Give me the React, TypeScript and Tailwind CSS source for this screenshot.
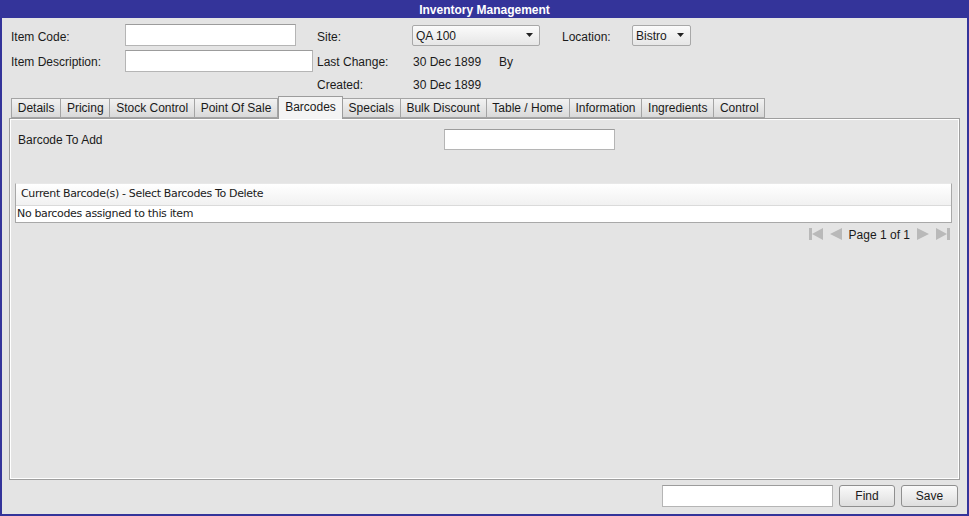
import { useState } from "react";

const tabs = [
  "Details",
  "Pricing",
  "Stock Control",
  "Point Of Sale",
  "Barcodes",
  "Specials",
  "Bulk Discount",
  "Table / Home",
  "Information",
  "Ingredients",
  "Control",
];

function TextBox({ className = "" }: { className?: string }) {
  return (
    <input
      className={`bg-white border border-[#b5b5b5] border-t-[#9c9c9c] outline-none px-1 text-[12px] ${className}`}
    />
  );
}

function Combo({ value, className = "" }: { value: string; className?: string }) {
  return (
    <div
      className={`flex items-center justify-between rounded-[2px] border border-[#a8a8a8] bg-gradient-to-b from-[#fbfbfb] to-[#e6e6e6] pl-[3px] pr-[6px] ${className}`}
    >
      <span className="pt-[1px]">{value}</span>
      <svg width="7" height="4" viewBox="0 0 7 4">
        <path d="M0 0h7L3.5 4z" fill="#222" />
      </svg>
    </div>
  );
}

function PagerIcon({ dir, end }: { dir: "l" | "r"; end?: boolean }) {
  return (
    <svg width="14" height="14" viewBox="0 0 14 14" className="shrink-0">
      {dir === "l" ? (
        <>
          {end && <rect x="0" y="1" width="3" height="12" fill="#b9b9b9" />}
          <path d={end ? "M14 1V13L3 7z" : "M13 1V13L1 7z"} fill="#b9b9b9" />
        </>
      ) : (
        <>
          <path d={end ? "M0 1V13L11 7z" : "M1 1V13L13 7z"} fill="#b9b9b9" />
          {end && <rect x="11" y="1" width="3" height="12" fill="#b9b9b9" />}
        </>
      )}
    </svg>
  );
}

export default function App() {
  const [active, setActive] = useState("Barcodes");

  return (
    <div
      className="w-[969px] h-[516px] bg-[#34349a] px-[2px] pb-[2px] flex flex-col text-[12px] text-[#1a1a1a]"
      style={{ fontFamily: '"Liberation Sans", Arial, sans-serif' }}
    >
      {/* title bar */}
      <div className="h-[18px] shrink-0 flex items-center justify-center pt-[1px] text-white font-bold text-[12px]">
        Inventory Management
      </div>

      <div className="flex-1 bg-[#e4e4e4] flex flex-col">
        {/* header fields */}
        <div className="pl-[9px] pt-[6px]">
          <div className="flex items-center h-[22px]">
            <span className="w-[114px] pt-[3px]">Item Code:</span>
            <TextBox className="w-[171px] h-[22px]" />
            <span className="ml-[21px] w-[95px] pt-[3px]">Site:</span>
            <Combo value="QA 100" className="w-[128px] h-[21px]" />
            <span className="ml-[22px] w-[70px] pt-[3px]">Location:</span>
            <Combo value="Bistro" className="w-[59px] h-[21px]" />
          </div>
          <div className="flex items-center h-[22px] mt-[4px]">
            <span className="w-[114px] pt-[2px]">Item Description:</span>
            <TextBox className="w-[188px] h-[22px]" />
            <span className="ml-[4px] w-[96px] pt-[2px]">Last Change:</span>
            <span className="w-[86px] pt-[2px]">30 Dec 1899</span>
            <span className="pt-[2px]">By</span>
          </div>
          <div className="flex items-center h-[18px] mt-[3px]">
            <span className="ml-[306px] w-[96px] pt-[2px]">Created:</span>
            <span className="pt-[2px]">30 Dec 1899</span>
          </div>
        </div>

        {/* tabs */}
        <div className="flex items-end pl-[9px] h-[24px] mt-[1px]">
          {tabs.map((t) => {
            const on = t === active;
            return (
              <button
                key={t}
                onClick={() => setActive(t)}
                className={
                  on
                    ? "h-[23px] px-[6px] border border-[#9c9c9c] border-b-0 bg-[#f4f4f4] -mb-[1px] relative z-10 text-[12px] pb-[3px]"
                    : "h-[20px] px-[5.75px] border border-[#a4a4a4] border-l-0 first:border-l bg-gradient-to-b from-[#f2f2f2] to-[#d9d9d9] text-[12px]"
                }
              >
                {t}
              </button>
            );
          })}
        </div>

        {/* tab panel */}
        <div className="mx-[7px] h-[362px] border border-[#9e9e9e] shadow-[inset_1px_1px_0_#fff,inset_-1px_-1px_0_#fff] bg-[#e4e4e4] px-[5px] flex flex-col">
          <div className="flex items-center h-[21px] mt-[10px]">
            <span className="ml-[3px] w-[426px] pt-[1px]">Barcode To Add</span>
            <TextBox className="w-[171px] h-[21px]" />
          </div>

          <div className="mt-[33px] mr-[2px] border border-[#a8a8a8] border-t-[#e8e8e8] bg-white">
            <div
              className="h-[22px] flex items-center pl-[5px] bg-gradient-to-b from-[#ffffff] to-[#f1f1f1] border-b border-[#dadada] text-[11px]"
              style={{ fontFamily: '"DejaVu Sans", Tahoma, sans-serif', letterSpacing: "-0.35px" }}
            >
              Current Barcode(s) - Select Barcodes To Delete
            </div>
            <div
              className="h-[16px] flex items-center pl-[1px] text-[11px]"
              style={{ fontFamily: '"DejaVu Sans", Tahoma, sans-serif', letterSpacing: "-0.35px" }}
            >
              No barcodes assigned to this item
            </div>
          </div>

          <div className="flex items-center justify-end gap-[6px] mt-[4px] mr-[4px] h-[14px]">
            <PagerIcon dir="l" end />
            <PagerIcon dir="l" />
            <span className="pt-[1px]">Page 1 of 1</span>
            <PagerIcon dir="r" />
            <PagerIcon dir="r" end />
          </div>
        </div>

        {/* footer */}
        <div className="flex items-center justify-end gap-[6px] pr-[9px] mt-[5px]">
          <TextBox className="w-[171px] h-[22px]" />
          <button className="w-[56px] h-[22px] rounded-[3px] border border-[#8f8f8f] bg-gradient-to-b from-[#fafafa] to-[#dedede]">
            Find
          </button>
          <button className="w-[57px] h-[22px] rounded-[3px] border border-[#8f8f8f] bg-gradient-to-b from-[#fafafa] to-[#dedede]">
            Save
          </button>
        </div>
      </div>
    </div>
  );
}
